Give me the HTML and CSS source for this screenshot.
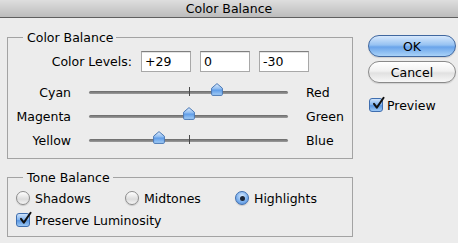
FILE: index.html
```html
<!DOCTYPE html>
<html>
<head>
<meta charset="utf-8">
<link rel="stylesheet" href="styles.css">
</head>
<body>
<div class="titlebar">Color Balance</div>
<div class="dialog">
  <div class="groups">
    <fieldset class="group group-color">
      <legend>Color Balance</legend>
      <div class="levels">
        <span class="levels-label">Color Levels:</span>
        <input class="field" type="text" value="+29">
        <input class="field" type="text" value="0">
        <input class="field" type="text" value="-30">
      </div>
      <div class="sliders">
        <div class="slider-row">
          <span class="lbl-left">Cyan</span>
          <div class="track"><span class="tick"></span>
            <svg class="thumb" style="left:calc(64.5% - 6px)" width="12" height="13" viewBox="0 0 12 13"><defs><linearGradient id="g1" x1="0" y1="0" x2="0" y2="1"><stop offset="0" stop-color="#e2eefc"/><stop offset="0.45" stop-color="#8cbaf0"/><stop offset="0.55" stop-color="#5f9de8"/><stop offset="1" stop-color="#a7cff7"/></linearGradient></defs><path d="M6 0.6 L11.4 5.2 V11.3 Q11.4 12.4 10.3 12.4 H1.7 Q0.6 12.4 0.6 11.3 V5.2 Z" fill="url(#g1)" stroke="#4a78b5" stroke-width="1"/></svg>
          </div>
          <span class="lbl-right">Red</span>
        </div>
        <div class="slider-row">
          <span class="lbl-left">Magenta</span>
          <div class="track"><span class="tick"></span>
            <svg class="thumb" style="left:calc(50% - 6px)" width="12" height="13" viewBox="0 0 12 13"><defs><linearGradient id="g2" x1="0" y1="0" x2="0" y2="1"><stop offset="0" stop-color="#e2eefc"/><stop offset="0.45" stop-color="#8cbaf0"/><stop offset="0.55" stop-color="#5f9de8"/><stop offset="1" stop-color="#a7cff7"/></linearGradient></defs><path d="M6 0.6 L11.4 5.2 V11.3 Q11.4 12.4 10.3 12.4 H1.7 Q0.6 12.4 0.6 11.3 V5.2 Z" fill="url(#g2)" stroke="#4a78b5" stroke-width="1"/></svg>
          </div>
          <span class="lbl-right">Green</span>
        </div>
        <div class="slider-row">
          <span class="lbl-left">Yellow</span>
          <div class="track"><span class="tick"></span>
            <svg class="thumb" style="left:calc(35% - 6px)" width="12" height="13" viewBox="0 0 12 13"><defs><linearGradient id="g3" x1="0" y1="0" x2="0" y2="1"><stop offset="0" stop-color="#e2eefc"/><stop offset="0.45" stop-color="#8cbaf0"/><stop offset="0.55" stop-color="#5f9de8"/><stop offset="1" stop-color="#a7cff7"/></linearGradient></defs><path d="M6 0.6 L11.4 5.2 V11.3 Q11.4 12.4 10.3 12.4 H1.7 Q0.6 12.4 0.6 11.3 V5.2 Z" fill="url(#g3)" stroke="#4a78b5" stroke-width="1"/></svg>
          </div>
          <span class="lbl-right">Blue</span>
        </div>
      </div>
    </fieldset>
    <fieldset class="group group-tone">
      <legend>Tone Balance</legend>
      <div class="radios">
        <div class="option"><span class="radio"></span>Shadows</div>
        <div class="option"><span class="radio"></span>Midtones</div>
        <div class="option"><span class="radio on"><span class="dot"></span></span>Highlights</div>
      </div>
      <div class="option check-row">
        <span class="check"><svg width="14" height="14" viewBox="0 0 14 14"><path d="M3 6.8 L5.8 10.6 L12.6 0.8" fill="none" stroke="#111" stroke-width="2" stroke-linecap="round" stroke-linejoin="round"/></svg></span>Preserve Luminosity
      </div>
    </fieldset>
  </div>
  <div class="actions">
    <button class="btn btn-default" type="button">OK</button>
    <button class="btn" type="button">Cancel</button>
    <div class="option preview">
      <span class="check"><svg width="14" height="14" viewBox="0 0 14 14"><path d="M3 6.8 L5.8 10.6 L12.6 0.8" fill="none" stroke="#111" stroke-width="2" stroke-linecap="round" stroke-linejoin="round"/></svg></span>Preview
    </div>
  </div>
</div>
</body>
</html>
```
FILE: styles.css
```css
* { box-sizing: border-box; }

body {
  margin: 0;
  width: 458px;
  height: 243px;
  overflow: hidden;
  background: #ececec;
  color: #000;
  font-family: "DejaVu Sans", "Liberation Sans", sans-serif;
  font-size: 12.5px;
  line-height: 15px;
}

.titlebar {
  height: 18px;
  background: linear-gradient(#dedede, #bcbcbc);
  border-bottom: 1px solid #5f5f5f;
  text-align: center;
  line-height: 17px;
}

.dialog {
  display: flex;
  gap: 15px;
  padding: 12px 2px 0 7px;
}

.groups {
  width: 346px;
  display: flex;
  flex-direction: column;
  gap: 11px;
}

.group {
  margin: 0;
  padding: 0 0 6px 0;
  border: 1px solid #a3a3a3;
  min-width: 0;
}

.group legend {
  margin-left: 15px;
  padding: 0 3px 0 4px;
  line-height: 15px;
}

.levels {
  display: grid;
  grid-template-columns: 124px 50px 50px 50px;
  column-gap: 9px;
  align-items: center;
  margin-top: 6px;
}

.levels-label { text-align: right; }

.field {
  height: 21px;
  width: 50px;
  margin: 0;
  padding: 0 3px;
  border: 1px solid #a8a8a8;
  border-top-color: #7f7f7f;
  background: #fff;
  font: inherit;
  color: #000;
  box-shadow: inset 0 1px 0 #e4e4e4;
}

.sliders { margin-top: 8px; }

.slider-row {
  display: grid;
  grid-template-columns: 63px 199px auto;
  column-gap: 18px;
  align-items: center;
  height: 24px;
}

.lbl-left { text-align: right; }

.track {
  position: relative;
  height: 3px;
  border-radius: 2px;
  background: linear-gradient(#6a6a6a, #9c9c9c);
}

.tick {
  position: absolute;
  left: 50%;
  top: -4px;
  width: 1px;
  height: 9px;
  background: #4a4a4a;
}

.thumb {
  position: absolute;
  top: -8px;
  display: block;
}

.radios {
  display: grid;
  grid-template-columns: 109px 110px auto;
  margin-top: 3px;
  padding-left: 8px;
}

.option {
  display: flex;
  align-items: center;
  gap: 5px;
  height: 20px;
}

.check-row {
  margin-top: 2px;
  padding-left: 8px;
}

.radio {
  width: 14px;
  height: 14px;
  border-radius: 50%;
  border: 1px solid #8c8c8c;
  background: linear-gradient(#ffffff, #dcdcdc 60%, #f4f4f4);
  box-shadow: 0 1px 1px rgba(0,0,0,0.15);
  display: flex;
  align-items: center;
  justify-content: center;
}

.radio.on {
  border-color: #3f6eaf;
  background: radial-gradient(circle at 50% 35%, #d8e9fc, #7fb2ee 55%, #4d8ad8);
}

.dot {
  width: 5px;
  height: 5px;
  border-radius: 50%;
  background: #1c2636;
}

.check {
  width: 14px;
  height: 14px;
  border: 1px solid #3f6eaf;
  border-radius: 3px;
  background: linear-gradient(#cde2fa, #7db1ee 50%, #5a97e2 55%, #9cc8f5);
  display: flex;
  align-items: center;
  justify-content: center;
}

.check svg {
  display: block;
  margin-top: -3px;
  margin-right: -3px;
  overflow: visible;
}

.actions {
  width: 88px;
  margin-top: 5px;
  display: flex;
  flex-direction: column;
  gap: 4px;
}

.btn {
  height: 22px;
  margin: 0;
  padding: 0;
  border: 1px solid #8a8a8a;
  border-radius: 11px;
  background: linear-gradient(#ffffff, #f1f1f1 45%, #e1e1e1 55%, #f7f7f7);
  font: inherit;
  color: #000;
  box-shadow: 0 1px 1px rgba(0,0,0,0.12);
}

.btn-default {
  border-color: #40679f;
  background: linear-gradient(#d7e8fc, #96c2f2 45%, #6aa4ea 55%, #a9d2f8);
}

.preview {
  margin-top: 10px;
  padding-left: 1px;
  gap: 4px;
  height: 16px;
}
```
